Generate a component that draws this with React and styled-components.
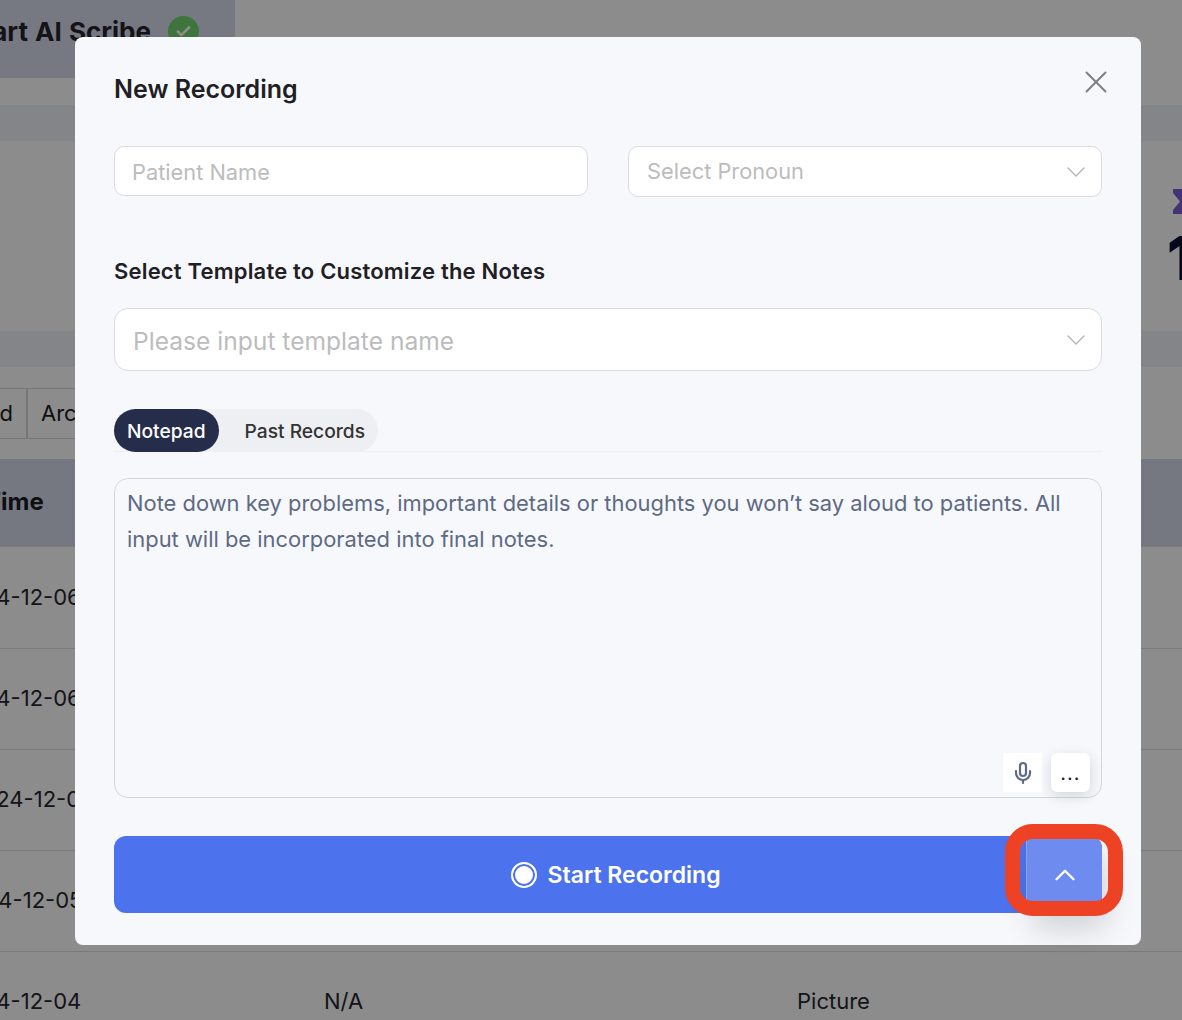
import styled, { createGlobalStyle } from "styled-components";
import { X, ChevronDown, ChevronUp, Mic, Check } from "lucide-react";

const rows = [
  { date: "2024-12-06", shift: 0 },
  { date: "2024-12-06", shift: 0 },
  { date: "2024-12-05", shift: 13 },
  { date: "2024-12-05", shift: 2 },
  { date: "2024-12-04", shift: 0 },
];

const App = () => {
  return (
    <>
      <GlobalStyle />
      <Page>
        <TopCard>
          <TopTitle>Smart AI Scribe</TopTitle>
          <CheckBadge>
            <Check size={17} strokeWidth={3.5} color="#fff" />
          </CheckBadge>
        </TopCard>
        <Band $mt="27px" />
        <StatSection>
          <StatBlock>
            <svg width="24" height="27" viewBox="0 0 24 27">
              <path d="M2 1h20v4l-7 8.500 7 8.500v4H2v-4l7-8.500-7-8.500z" fill="#7a5cd6" />
            </svg>
            <StatNumber>12</StatNumber>
          </StatBlock>
        </StatSection>
        <Band />
        <FilterRow>
          <FilterTab $first>Completed</FilterTab>
          <FilterTab>Archived</FilterTab>
        </FilterRow>
        <TableHead>
          <HeadCell>Time</HeadCell>
        </TableHead>
        {rows.map((row, i) => (
          <TableRow key={i} $tall={i === 0}>
            <DateCell $shift={row.shift}>{row.date}</DateCell>
            <span>N/A</span>
            <span>Picture</span>
          </TableRow>
        ))}
      </Page>

      <Overlay>
        <Modal>
          <ModalHeader>
            <ModalTitle>New Recording</ModalTitle>
            <CloseButton>
              <X size={38} strokeWidth={1.25} />
            </CloseButton>
          </ModalHeader>

          <FormRow>
            <NameInput placeholder="Patient Name" readOnly />
            <SelectBox>
              <span>Select Pronoun</span>
              <ChevronDown size={32} strokeWidth={1} color="#b4b4b4" />
            </SelectBox>
          </FormRow>

          <SectionLabel>Select Template to Customize the Notes</SectionLabel>
          <SelectBox $large>
            <span>Please input template name</span>
            <ChevronDown size={32} strokeWidth={1} color="#b4b4b4" />
          </SelectBox>

          <TabBar>
            <TabGroup>
              <TabButton $active>Notepad</TabButton>
              <TabButton>Past Records</TabButton>
            </TabGroup>
          </TabBar>

          <NoteBox>
            <NoteText>
              Note down key problems, important details or thoughts you won’t
              say aloud to patients. All input will be incorporated into final
              notes.
            </NoteText>
            <NoteTools>
              <MicButton>
                <Mic size={24} strokeWidth={2.2} color="#5d6a85" />
              </MicButton>
              <MoreButton>...</MoreButton>
            </NoteTools>
          </NoteBox>

          <RecordBar>
            <RecordMain>
              <RecordDot />
              Start Recording
            </RecordMain>
            <RecordToggle>
              <ChevronUp size={34} strokeWidth={1.7} color="#fff" />
              <Highlight />
            </RecordToggle>
          </RecordBar>
        </Modal>
      </Overlay>
    </>
  );
};

const GlobalStyle = createGlobalStyle`
  html, body {
    margin: 0;
    padding: 0;
    height: 100%;
    overflow: hidden;
    background: #fff;
    font-family: "Inter", "Liberation Sans", sans-serif;
  }
  * {
    box-sizing: border-box;
  }
`;

const Page = styled.div`
  width: 1182px;
  height: 1020px;
  overflow: hidden;
  background: #fff;
  color: #1c1c24;
`;

const TopCard = styled.div`
  width: 235px;
  height: 78px;
  background: #d9dced;
  display: flex;
  align-items: center;
  justify-content: flex-end;
  padding: 0 36px 16px 0;
  gap: 17px;
  overflow: hidden;
`;

const TopTitle = styled.div`
  font-size: 26px;
  font-weight: 700;
  word-spacing: 1px;
  white-space: nowrap;
  color: #23242c;
`;

const CheckBadge = styled.div`
  width: 31px;
  height: 31px;
  border-radius: 50%;
  background: #6fd66f;
  flex: none;
  display: flex;
  align-items: center;
  justify-content: center;
`;

const Band = styled.div`
  height: 36px;
  background: #f0f2f8;
  margin-top: ${(p) => p.$mt || 0};
`;

const StatSection = styled.div`
  height: 190px;
  display: flex;
  justify-content: flex-end;
  margin-right: -60px;
`;

const StatBlock = styled.div`
  width: 74px;
  padding: 47px 0 0 3px;
  display: flex;
  flex-direction: column;
  gap: 13px;
`;

const StatNumber = styled.div`
  font-size: 60px;
  line-height: 60px;
  font-weight: 900;
  color: #0a1030;
  margin-left: -4px;
`;

const FilterRow = styled.div`
  height: 51px;
  margin: 21px 0 20px -130px;
  display: flex;
  width: 400px;
  border-top: 1px solid #d8d8d8;
  border-bottom: 1px solid #d8d8d8;
`;

const FilterTab = styled.div`
  width: ${(p) => (p.$first ? "158px" : "auto")};
  padding: 0 13px;
  text-align: right;
  font-size: 22px;
  line-height: 49px;
  border-right: 2px solid #d8d8d8;
  white-space: nowrap;
`;

const TableHead = styled.div`
  height: 87px;
  background: #d6d9ec;
  display: flex;
  align-items: center;
  margin-left: -15px;
  padding-bottom: 2px;
`;

const HeadCell = styled.div`
  font-size: 24px;
  font-weight: 700;
`;

const TableRow = styled.div`
  height: ${(p) => (p.$tall ? "102px" : "101px")};
  border-top: 1px solid #e0e0e0;
  display: grid;
  grid-template-columns: 368px 473px 1fr;
  align-items: center;
  margin-left: -44px;
  padding-bottom: 2px;
  font-size: 22px;
  color: #26262e;
`;

const DateCell = styled.span`
  margin-left: ${(p) => p.$shift}px;
`;

const Overlay = styled.div`
  position: fixed;
  inset: 0;
  background: rgba(0, 0, 0, 0.45);
  padding: 37px 41px 0 75px;
`;

const Modal = styled.div`
  width: 1066px;
  height: 908px;
  background: #f7f8fc;
  border-radius: 8px;
  padding: 37px 39px 0;
  color: #1f2024;
`;

const ModalHeader = styled.div`
  display: flex;
  align-items: flex-start;
  justify-content: space-between;
  height: 72px;
`;

const ModalTitle = styled.div`
  font-size: 25px;
  line-height: 30px;
  font-weight: 600;
`;

const CloseButton = styled.div`
  color: #7d8085;
  margin: -11px -13px 0 0;
  display: flex;
`;

const FormRow = styled.div`
  display: grid;
  grid-template-columns: 1fr 1fr;
  align-items: start;
  gap: 40px;
`;

const NameInput = styled.input`
  width: 100%;
  height: 50px;
  padding: 1px 17px 0;
  border: 1px solid #dcdcdf;
  border-radius: 10px;
  background: #fff;
  font-family: inherit;
  font-size: 21.8px;
  outline: none;

  &::placeholder {
    color: #bcbcbc;
  }
`;

const SelectBox = styled.div`
  height: ${(p) => (p.$large ? "63px" : "51px")};
  padding: 0 9px 0 18px;
  border: 1px solid #dcdcdf;
  border-radius: ${(p) => (p.$large ? "14px" : "10px")};
  background: #fff;
  display: flex;
  align-items: center;
  justify-content: space-between;
  font-size: ${(p) => (p.$large ? "24.6px" : "21.8px")};
  color: #bcbcbc;

  span {
    margin-top: ${(p) => (p.$large ? "2px" : "-2px")};
  }
`;

const SectionLabel = styled.div`
  margin: 60px 0 23px;
  font-size: 22px;
  line-height: 28px;
  font-weight: 600;
  letter-spacing: 0.19px;
`;

const TabBar = styled.div`
  margin-top: 38px;
  border-bottom: 1px solid #eeeff2;
  height: 43px;
`;

const TabGroup = styled.div`
  display: inline-flex;
  height: 43px;
  border-radius: 22px;
  background: #eeeff2;
`;

const TabButton = styled.div`
  height: 43px;
  padding: ${(p) => (p.$active ? "0 13px" : "0 13px 0 26px")};
  border-radius: 22px;
  display: flex;
  align-items: center;
  font-size: 19.2px;
  font-weight: 500;
  background: ${(p) => (p.$active ? "#252d4a" : "transparent")};
  color: ${(p) => (p.$active ? "#fff" : "#333")};
`;

const NoteBox = styled.div`
  position: relative;
  margin-top: 26px;
  height: 320px;
  border: 1px solid #d5d6da;
  border-radius: 14px;
  padding: 6px 12px;
`;

const NoteText = styled.div`
  font-size: 21.92px;
  line-height: 36px;
  color: #5d6a85;
`;

const NoteTools = styled.div`
  position: absolute;
  right: 11px;
  bottom: 5px;
  display: flex;
  gap: 9px;
`;

const MicButton = styled.div`
  width: 39px;
  height: 39px;
  background: #fff;
  display: flex;
  align-items: center;
  justify-content: center;
`;

const MoreButton = styled.div`
  width: 39px;
  height: 39px;
  background: #fff;
  border-radius: 6px;
  box-shadow: 0 4px 14px rgba(0, 0, 0, 0.14);
  display: flex;
  align-items: center;
  justify-content: center;
  font-size: 20px;
  line-height: 20px;
  letter-spacing: 1px;
  color: #222;
`;

const RecordBar = styled.div`
  margin-top: 38px;
  height: 77px;
  display: flex;
  border-radius: 12px;
  background: #4c72ed;
  color: #fff;
`;

const RecordMain = styled.div`
  flex: 1;
  display: flex;
  align-items: center;
  justify-content: center;
  gap: 10px;
  padding-left: 92px;
  font-size: 23px;
  font-weight: 600;
`;

const RecordDot = styled.div`
  width: 26px;
  height: 26px;
  border-radius: 50%;
  background: #fff;
  border: 2px solid #fff;
  box-shadow: inset 0 0 0 2px #4c72ed;
`;

const RecordToggle = styled.div`
  position: relative;
  width: 76px;
  background: #6e8cf0;
  border-left: 1px solid #8aa3f5;
  border-radius: 0 12px 12px 0;
  display: flex;
  align-items: center;
  justify-content: center;
  box-shadow: 6px 18px 30px rgba(0, 0, 0, 0.14);
`;

const Highlight = styled.div`
  position: absolute;
  top: -12px;
  left: -22px;
  right: -21px;
  bottom: -3px;
  border: 15px solid #ee4225;
  border-radius: 28px;
`;

export default App;
